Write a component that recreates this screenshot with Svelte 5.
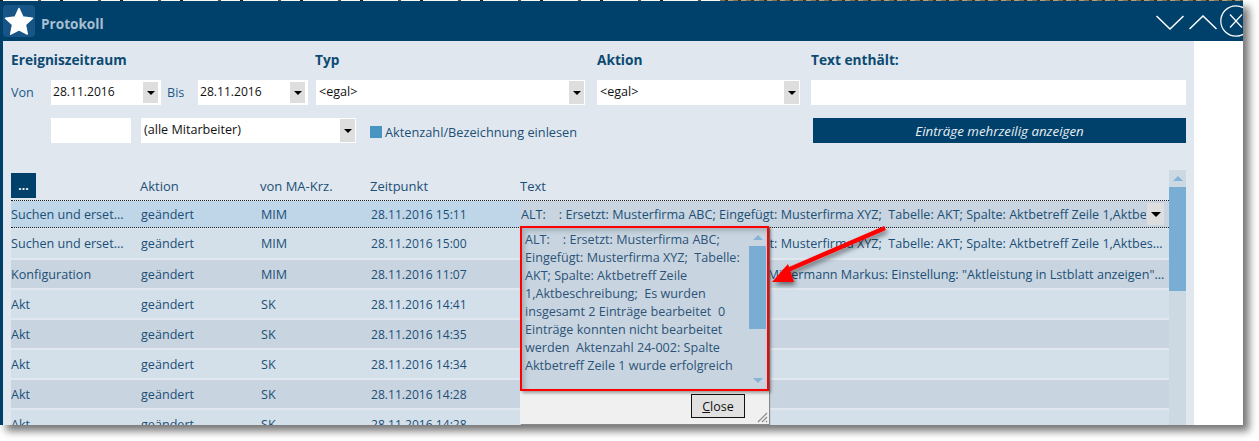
<script>
	const rows = [
		{ name: 'Suchen und ersetzen', action: 'geändert', ma: 'MIM', time: '28.11.2016 15:11', selected: true,
			text: 'ALT:    : Ersetzt: Musterfirma ABC; Eingefügt: Musterfirma XYZ;  Tabelle: AKT; Spalte: Aktbetreff Zeile 1,Aktbeschreibung' },
		{ name: 'Suchen und ersetzen', action: 'geändert', ma: 'MIM', time: '28.11.2016 15:00',
			text: 'ALT:    : Ersetzt: Musterfirma ABC; Eingefügt: Musterfirma XYZ;  Tabelle: AKT; Spalte: Aktbetreff Zeile 1,Aktbeschreibung; Es wurden' },
		{ name: 'Konfiguration', action: 'geändert', ma: 'MIM', time: '28.11.2016 11:07',
			text: 'Konfiguration wurde geändert:  Benutzer: Mittermann Markus: Einstellung: "Aktleistung in Lstblatt anzeigen"...' },
		{ name: 'Akt', action: 'geändert', ma: 'SK', time: '28.11.2016 14:41', text: '' },
		{ name: 'Akt', action: 'geändert', ma: 'SK', time: '28.11.2016 14:35', text: '' },
		{ name: 'Akt', action: 'geändert', ma: 'SK', time: '28.11.2016 14:34', text: '' },
		{ name: 'Akt', action: 'geändert', ma: 'SK', time: '28.11.2016 14:28', text: '' },
		{ name: 'Akt', action: 'geändert', ma: 'SK', time: '28.11.2016 14:28', text: '' }
	];

	const popupText =
		'ALT:    : Ersetzt: Musterfirma ABC; Eingefügt: Musterfirma XYZ;  Tabelle: AKT; Spalte: Aktbetreff Zeile 1,Aktbeschreibung;  Es wurden insgesamt 2 Einträge bearbeitet  0 Einträge konnten nicht bearbeitet werden  Aktenzahl 24-002: Spalte Aktbetreff Zeile 1 wurde erfolgreich';
</script>

{#snippet caret()}
	<span class="caret"></span>
{/snippet}

{#snippet dropdown(value, cls)}
	<div class="dropdown {cls}">
		<span class="value">{value}</span>
		<span class="drop-btn">{@render caret()}</span>
	</div>
{/snippet}

<div class="page">
	<div class="photo-strip"></div>
	<div class="window">
		<header class="titlebar">
			<div class="logo">
				<svg viewBox="0 0 32 32" width="32" height="32">
					<path d="M16 3.5l3.9 8.6 9.6 1.1-7.1 6.5 1.9 9.4L16 24.8l-8.3 4.3 1.9-9.4-7.1-6.5 9.6-1.1z" fill="#fff" stroke="#fff" stroke-width="1.5" stroke-linejoin="round" />
				</svg>
			</div>
			<span class="title">Protokoll</span>
			<div class="win-controls">
				<svg class="chev" viewBox="0 0 28 15" width="28" height="15"><path d="M.5 1L14 14 27.5 1" fill="none" stroke="#fff" stroke-width="1.5" /></svg>
				<svg class="chev" viewBox="0 0 28 15" width="28" height="15"><path d="M.5 14L14 1l13.5 13" fill="none" stroke="#fff" stroke-width="1.5" /></svg>
				<svg viewBox="0 0 32 32" width="32" height="32">
					<circle cx="16" cy="16" r="15.2" fill="none" stroke="#fff" stroke-width="1.2" />
					<path d="M10 9.5l12 13M22 9.5l-12 13" fill="none" stroke="#fff" stroke-width="1.2" />
				</svg>
			</div>
		</header>

		<div class="body">
			<div class="panel">
				<section class="filters">
					<h4>Ereigniszeitraum</h4>
					<h4>Typ</h4>
					<h4>Aktion</h4>
					<h4>Text enthält:</h4>

					<div class="range">
						<span class="lbl von">Von</span>
						{@render dropdown('28.11.2016', 'date')}
						<span class="lbl bis">Bis</span>
						{@render dropdown('28.11.2016', 'date')}
					</div>
					{@render dropdown('<egal>', 'typ')}
					{@render dropdown('<egal>', 'aktion')}
					<div class="textfield"></div>
				</section>

				<section class="filters2">
					<div class="ma-short"></div>
					{@render dropdown('(alle Mitarbeiter)', 'ma')}
					<span class="check"></span>
					<span class="check-label">Aktenzahl/Bezeichnung einlesen</span>
					<button class="multiline">Einträge mehrzeilig anzeigen</button>
				</section>

				<section class="list">
					<div class="table">
						<div class="thead">
							<div class="col"><button class="more">...</button></div>
							<div class="col">Aktion</div>
							<div class="col">von MA-Krz.</div>
							<div class="col">Zeitpunkt</div>
							<div class="col">Text</div>
						</div>
						{#each rows as row}
							<div class="row" class:selected={row.selected}>
								<div class="cell name">{row.name}</div>
								<div class="cell">{row.action}</div>
								<div class="cell">{row.ma}</div>
								<div class="cell time">{row.time}</div>
								<div class="cell text">
									<span class="clip">{row.text}</span>
									{#if row.selected}
										<span class="expand">{@render caret()}</span>
									{/if}
								</div>
							</div>
						{/each}
					</div>
					<div class="scrollbar">
						<span class="arrow up"></span>
						<div class="thumb"></div>
					</div>
				</section>
			</div>
			<div class="blank"></div>

			<!-- expanded text popup, floats over the list -->
			<div class="popup">
				<div class="popup-text">
					<p>{popupText}</p>
					<div class="popup-scroll">
						<span class="arrow up"></span>
						<div class="popup-thumb"></div>
						<span class="arrow down"></span>
					</div>
				</div>
				<div class="popup-foot">
					<button class="close"><u>C</u>lose</button>
					<svg class="grip" viewBox="0 0 12 12" width="12" height="12">
						<path d="M11 2L2 11M11 6l-5 5M11 10l-1 1" stroke="#888" stroke-width="1.2" fill="none" />
					</svg>
				</div>
			</div>

			<svg class="pointer" viewBox="0 0 130 70" width="130" height="70">
				<defs>
					<filter id="arrow-shadow" x="-20%" y="-20%" width="150%" height="160%">
						<feDropShadow dx="2" dy="3" stdDeviation="2.5" flood-color="#000" flood-opacity="0.5" />
					</filter>
				</defs>
				<g filter="url(#arrow-shadow)">
					<path d="M118 5L16 49" stroke="#f00" stroke-width="4.5" fill="none" />
					<path d="M5 59L21 41l6 18z" fill="#f00" />
				</g>
			</svg>
		</div>
	</div>
</div>

<style>
	:global(body) {
		background: #fff;
	}
	.page {
		height: 441px;
		overflow: hidden;
		font-family: 'Open Sans', sans-serif;
		font-size: 12.6px;
		color: #1c4f76;
	}
	.photo-strip {
		height: 1px;
		width: 1243px;
		background:
			repeating-linear-gradient(90deg, #8a7a5c 0 5px, #3a342a 5px 8px, #b3a680 8px 13px) 720px 0 / 523px 1px no-repeat,
			repeating-linear-gradient(90deg, #222 0 3px, #fff 3px 38px, #555 38px 41px, #fff 41px 60px);
	}
	.window {
		position: relative;
		width: 1243px;
		height: 424px;
		background: #fff;
		box-shadow: 6px 6px 8px rgba(0, 0, 0, 0.55);
	}
	.titlebar {
		height: 40px;
		background: #00416b;
		display: flex;
		align-items: center;
		padding-left: 3px;
		overflow: hidden;
	}
	.logo {
		width: 32px;
		height: 32px;
		background: #175586;
		border-radius: 4px;
	}
	.title {
		margin: 4px 0 0 6px;
		font-weight: 700;
		font-size: 13.6px;
		color: #a8bfd1;
	}
	.win-controls {
		margin-left: auto;
		margin-right: -9px;
		display: flex;
		align-items: center;
	}
	.chev {
		margin: 2px 5px 0 0;
	}
	.chev + .chev {
		margin-right: 3px;
	}
	.body {
		display: flex;
		height: 384px;
		overflow: hidden;
		position: relative;
		border-left: 3px solid #00416b;
	}
	.panel {
		width: 1191px;
		padding: 0 8px;
		box-sizing: border-box;
		background: #e0e7ef;
	}
	.blank {
		flex: 1;
	}
	h4 {
		margin: 0;
		font-size: 13.7px;
		font-weight: 700;
		color: #0d4a72;
		line-height: 18px;
	}
	.filters {
		display: grid;
		grid-template-columns: 304px 282px 214px 375px;
		row-gap: 11px;
		padding-top: 10px;
		align-items: center;
	}
	.range {
		display: flex;
		align-items: center;
		height: 25px;
	}
	.lbl {
		color: #1c5a88;
	}
	.von {
		width: 40px;
	}
	.bis {
		width: 37px;
		padding-left: 6px;
		box-sizing: border-box;
	}
	.dropdown {
		display: flex;
		align-items: center;
		height: 25px;
		background: #fff;
		box-sizing: border-box;
		color: #111;
		font-size: 12.6px;
	}
	.value {
		flex: 1;
		padding: 0 0 2px 3px;
	}
	.drop-btn {
		width: 15px;
		height: 23px;
		margin-right: 1px;
		background: #dedede;
		display: flex;
		align-items: center;
		justify-content: center;
	}
	.caret {
		width: 0;
		height: 0;
		border-left: 4px solid transparent;
		border-right: 4px solid transparent;
		border-top: 4px solid #000;
	}
	.date {
		width: 110px;
		font-size: 12.1px;
	}
	.date .value {
		padding-left: 2px;
	}
	.date .drop-btn {
		height: 21px;
		margin-right: 3px;
	}
	.typ {
		width: 269px;
		margin-left: 1px;
	}
	.aktion {
		width: 203px;
	}
	.textfield {
		width: 375px;
		height: 25px;
		background: #fff;
	}
	.filters2 {
		display: flex;
		align-items: center;
		margin-top: 13px;
		height: 25px;
	}
	.ma-short {
		width: 80px;
		height: 25px;
		background: #fff;
		margin-left: 40px;
	}
	.ma {
		width: 215px;
		margin-left: 10px;
	}
	.check {
		width: 12px;
		height: 12px;
		margin: 3px 0 0 14px;
		background: #4a94c4;
	}
	.check-label {
		margin: 3px 0 0 3px;
		width: 428px;
		font-size: 12.75px;
	}
	.multiline {
		width: 373px;
		height: 25px;
		border: 0;
		background: #00416b;
		color: #e8eef3;
		font: italic 13.3px 'Open Sans', sans-serif;
	}
	.list {
		display: flex;
		margin-top: 27px;
		width: 1175px;
		align-items: flex-start;
	}
	.table {
		width: 1158px;
	}
	.thead,
	.row {
		display: grid;
		grid-template-columns: 129px 120px 110px 150px 1fr;
	}
	.thead {
		height: 31px;
		align-items: center;
		border-bottom: 1px dotted #222;
		box-sizing: border-box;
		font-size: 13px;
	}
	.thead .col:not(:first-child) {
		padding-top: 1px;
	}
	.more {
		display: block;
		width: 25px;
		height: 25px;
		border: 0;
		padding: 0;
		background: #00416b;
		color: #fff;
		font: 700 12px 'Open Sans', sans-serif;
	}
	.row {
		height: 28px;
		margin-bottom: 2px;
		align-items: center;
	}
	.row:nth-child(odd) {
		background: #d3e0ea;
	}
	.row:nth-child(even) {
		background: #c8d5e0;
	}
	.row.selected {
		height: 27px;
		margin-bottom: 1px;
		background: #bfd6e9;
		border-bottom: 1px dotted #222;
		box-sizing: border-box;
	}
	.selected + .row {
		height: 29px;
	}
	.cell {
		white-space: pre;
		overflow: hidden;
		padding-left: 1px;
	}
	.name {
		padding-left: 0;
		padding-right: 16px;
		text-overflow: ellipsis;
	}
	.time {
		font-size: 12.1px;
	}
	.text {
		display: flex;
		align-items: center;
		height: 100%;
		padding-right: 4px;
	}
	.selected .text {
		background: #c8d5e0;
		padding-right: 5px;
	}
	.clip {
		flex: 1;
		min-width: 0;
		overflow: hidden;
		text-overflow: ellipsis;
	}
	.selected .clip {
		text-overflow: clip;
	}
	.expand {
		width: 17px;
		height: 22px;
		margin-left: 1px;
		background: #dedede;
		display: flex;
		align-items: center;
		justify-content: center;
	}
	.expand .caret {
		border-left-width: 5px;
		border-right-width: 5px;
		border-top-width: 5px;
	}
	.scrollbar {
		width: 17px;
		height: 300px;
		background: #ccd8e2;
		position: relative;
		display: flex;
		flex-direction: column;
		align-items: center;
	}
	.thumb {
		align-self: stretch;
		height: 104px;
		background: #7aadd4;
	}
	.arrow {
		display: block;
		width: 0;
		height: 0;
		border-left: 5px solid transparent;
		border-right: 5px solid transparent;
	}
	.arrow.up {
		border-bottom: 5px solid #86b3d8;
		margin: 6px 0;
	}
	.arrow.down {
		border-top: 5px solid #86b3d8;
		margin: 6px 0;
	}

	.popup {
		position: absolute;
		left: 517px;
		top: 185px;
		width: 249px;
		height: 198px;
		background: #f0f0f0;
		box-shadow: 1px 1px 1px #888;
		display: flex;
		flex-direction: column;
	}
	.popup-text {
		height: 165px;
		box-sizing: border-box;
		border: 2px solid #f00;
		background: #c8d5e0;
		display: flex;
		box-shadow: inset 3px 3px 5px rgba(0, 0, 0, 0.18), 2px 2px 3px rgba(0, 0, 0, 0.35);
	}
	.popup-text p {
		flex: 1;
		margin: 0;
		padding: 3px 0 0 3px;
		line-height: 18px;
		white-space: pre-wrap;
		color: #2c5378;
		font-size: 12.6px;
	}
	.popup-scroll {
		width: 17px;
		display: flex;
		flex-direction: column;
		align-items: center;
		margin-right: 1px;
		flex: none;
		height: 100%;
	}
	.popup-scroll .arrow.up {
		margin-top: 7px;
	}
	.popup-thumb {
		align-self: stretch;
		height: 83px;
		background: #7aadd4;
		flex: none;
	}
	.popup-scroll .arrow.down {
		margin-top: auto;
	}
	.popup-foot {
		flex: 1;
		position: relative;
		display: flex;
		align-items: flex-start;
		justify-content: flex-end;
		padding: 3px 24px 0 0;
	}
	.close {
		width: 54px;
		height: 24px;
		padding: 0;
		border: 1px solid #111;
		background: #e1e1e1;
		color: #111;
		font: 12.5px 'Open Sans', sans-serif;
	}
	.grip {
		position: absolute;
		right: 1px;
		bottom: 1px;
	}
	.pointer {
		position: absolute;
		left: 764px;
		top: 182px;
	}
</style>
